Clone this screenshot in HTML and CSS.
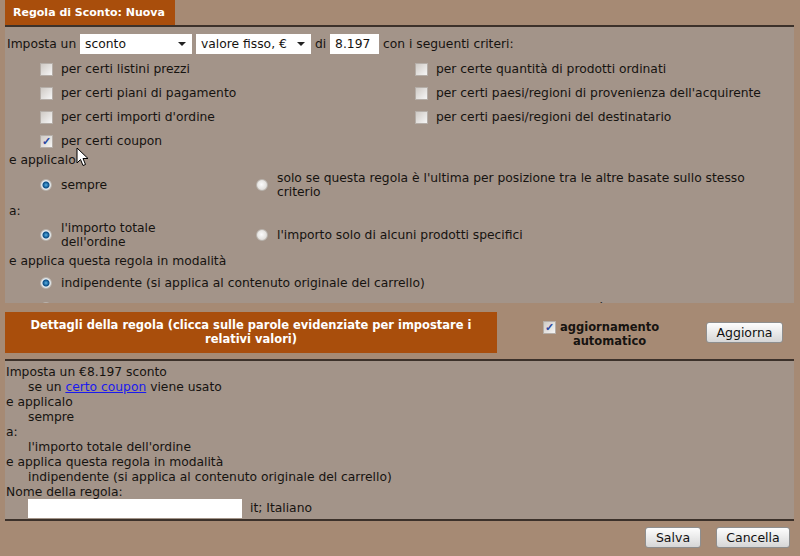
FILE: index.html
```html
<!DOCTYPE html>
<html lang="it">
<head>
  <meta charset="UTF-8" />
  <title>Regola di Sconto: Nuova</title>
  <link rel="stylesheet" href="styles.css">
</head>
<body>
  <div class="page">
    <div class="title-tab">Regola di Sconto: Nuova</div>

    <div class="top-panel">
      <div class="main-row">
        Imposta un
        <span class="select w1"><select><option>sconto</option></select><span class="caret"></span></span>
        <span class="select w2"><select><option>valore fisso, €</option></select><span class="caret"></span></span>
        di <input class="amount" type="text" value="8.197" />
        con i seguenti criteri:
      </div>

      <div class="criteria">
        <label class="crit"><input type="checkbox" class="cb" /> per certi listini prezzi</label>
        <label class="crit"><input type="checkbox" class="cb" /> per certe quantità di prodotti ordinati</label>
        <label class="crit"><input type="checkbox" class="cb" /> per certi piani di pagamento</label>
        <label class="crit"><input type="checkbox" class="cb" /> per certi paesi/regioni di provenienza dell'acquirente</label>
        <label class="crit"><input type="checkbox" class="cb" /> per certi importi d'ordine</label>
        <label class="crit"><input type="checkbox" class="cb" /> per certi paesi/regioni del destinatario</label>
        <label class="crit"><input type="checkbox" class="cb" checked /> per certi coupon</label>
      </div>

      <div class="sub first-sub">e applicalo</div>
      <div class="opt-row r1">
        <label class="opt left"><input type="radio" name="when" class="rd" checked /><span class="txt">sempre</span></label>
        <label class="opt"><input type="radio" name="when" class="rd" /><span class="txt wide">solo se questa regola è l'ultima per posizione tra le altre basate sullo stesso criterio</span></label>
      </div>

      <div class="sub s2">a:</div>
      <div class="opt-row r2">
        <label class="opt left"><input type="radio" name="target" class="rd" checked /><span class="txt narrow">l'importo totale dell'ordine</span></label>
        <label class="opt"><input type="radio" name="target" class="rd" /><span class="txt wide">l'importo solo di alcuni prodotti specifici</span></label>
      </div>

      <div class="sub s3">e applica questa regola in modalità</div>
      <div class="opt-row r3">
        <label class="opt"><input type="radio" name="mode" class="rd" checked /><span class="txt">indipendente (si applica al contenuto originale del carrello)</span></label>
      </div>
      <div class="opt-row r4">
        <label class="opt"><input type="radio" name="mode" class="rd" /><span class="txt">in cascata (si applica al risultato delle regole precedenti impostate nella stessa modalità)</span></label>
      </div>
    </div>

    <div class="middle">
      <div class="details-box">Dettagli della regola (clicca sulle parole evidenziate per impostare i relativi valori)</div>
      <label class="auto">
        <input type="checkbox" class="cb" checked />
        <span class="auto-text">aggiornamento<br>automatico</span>
      </label>
      <button class="btn refresh">Aggiorna</button>
    </div>

    <div class="summary">
      <div>Imposta un €8.197 sconto</div>
      <div class="ind">se un <a href="#">certo coupon</a> viene usato</div>
      <div>e applicalo</div>
      <div class="ind">sempre</div>
      <div>a:</div>
      <div class="ind">l'importo totale dell'ordine</div>
      <div>e applica questa regola in modalità</div>
      <div class="ind">indipendente (si applica al contenuto originale del carrello)</div>
      <div>Nome della regola:</div>
      <div class="ind name-row"><input type="text" class="name-input" /> it; Italiano</div>
    </div>

    <div class="actions">
      <button class="btn save">Salva</button>
      <button class="btn cancel">Cancella</button>
    </div>
  </div>

  <svg class="cursor" width="13" height="20" viewBox="0 0 13 20">
    <path d="M1 1 L1 16 L4.5 12.5 L7 18.5 L9.5 17.5 L7 11.5 L12 11.5 Z" fill="#fff" stroke="#000" stroke-width="1" stroke-linejoin="round" />
  </svg>
</body>
</html>
```

FILE: styles.css
```css
* {
  box-sizing: border-box;
}

body {
  margin: 0;
  background-color: #a68a74;
  font-family: "DejaVu Sans", Verdana, sans-serif;
  font-size: 12.3px;
  color: #161310;
  position: relative;
}

.page {
  padding: 0 6px 0 5px;
}

.title-tab {
  display: inline-block;
  background-color: #a94e0c;
  color: #fff;
  font-weight: bold;
  font-size: 11px;
  height: 25px;
  line-height: 25px;
  padding: 0 8px;
  width: 170px;
  white-space: nowrap;
}

.top-panel {
  border-top: 2px solid #3c312a;
  background-color: #a39489;
  height: 278px;
  overflow: hidden;
  padding-left: 2px;
}

/* first line: imposta un ... */
.main-row {
  margin-top: 7px;
  height: 20px;
  line-height: 20px;
  white-space: nowrap;
}

.select {
  display: inline-flex;
  align-items: center;
  background: #fff;
  height: 20px;
  vertical-align: top;
  padding-right: 6px;
}

.select.w1 { width: 112px; }
.select.w2 { width: 115px; }

.select select {
  appearance: none;
  border: none;
  background: transparent;
  font: inherit;
  color: #161310;
  flex: 1;
  padding: 0 0 0 5px;
  outline: none;
}

.caret {
  width: 0;
  height: 0;
  border-left: 4px solid transparent;
  border-right: 4px solid transparent;
  border-top: 4px solid #222;
}

.amount {
  width: 49px;
  height: 20px;
  border: none;
  font: inherit;
  padding: 0 5px;
  vertical-align: top;
  color: #161310;
}

.criteria {
  display: grid;
  grid-template-columns: 375px 1fr;
  padding-left: 33px;
  margin-top: 3px;
}

.crit {
  display: flex;
  align-items: center;
  gap: 8px;
  height: 24px;
  white-space: nowrap;
}

.cb {
  appearance: none;
  margin: 0;
  width: 13px;
  height: 13px;
  border: 1px solid #b5aea8;
  background: linear-gradient(135deg, #cfcac5, #f6f6f6);
  display: inline-grid;
  place-content: center;
  flex-shrink: 0;
}

.cb:checked::after {
  content: "✓";
  color: #2c48a0;
  font-size: 11px;
  font-weight: bold;
  line-height: 1;
}

.rd {
  appearance: none;
  margin: 0;
  width: 12px;
  height: 12px;
  border-radius: 50%;
  border: 1px solid #b9b3ad;
  background: radial-gradient(circle at 45% 45%, #fbfbfb 0, #d4d0cc 100%);
  flex-shrink: 0;
}

.rd:checked {
  background: radial-gradient(circle at 50% 50%, #5fb0e0 0, #1e6ea8 2px, #0c4c84 3px, #e8eef2 4px, #d2d0cc 100%);
}

.sub {
  line-height: 15px;
  padding-left: 2px;
}

.s2, .s3 { margin-top: 5px; }

.opt-row {
  display: flex;
  align-items: center;
  padding-left: 33px;
}

.r1 { margin-top: 3px; }
.r2 { margin-top: 2px; }
.r3 { margin-top: 7px; }
.r4 { margin-top: 11px; white-space: nowrap; }

.opt {
  display: flex;
  align-items: center;
  gap: 9px;
}

.opt.left {
  width: 216px;
}

.txt {
  line-height: 14px;
}

.txt.narrow { width: 110px; }
.txt.wide { width: 490px; }

/* middle bar */
.middle {
  display: flex;
  align-items: center;
  margin-top: 9px;
  height: 41px;
}

.details-box {
  width: 492px;
  height: 41px;
  background-color: #a94e0c;
  color: #fff;
  font-weight: bold;
  font-size: 11.5px;
  text-align: center;
  line-height: 14px;
  padding: 6px 16px;
}

.auto {
  display: flex;
  align-items: flex-start;
  gap: 4px;
  margin-left: 46px;
  font-weight: bold;
  font-size: 11.5px;
  margin-top: 2px;
}

.auto .cb {
  margin-top: 1px;
}

.auto-text {
  text-align: center;
  line-height: 14px;
}

.btn {
  font-family: "DejaVu Sans", Verdana, sans-serif;
  font-size: 12.5px;
  color: #111;
  height: 21px;
  padding: 0;
  border: 1px solid #8e8e8e;
  border-radius: 3px;
  background: linear-gradient(#fdfdfd, #e6e6e6 60%, #d6d6d6);
}

.refresh {
  width: 77px;
  margin-left: auto;
  margin-right: 11px;
}

.summary {
  margin-top: 6px;
  border-top: 2px solid #3c312a;
  border-bottom: 2px solid #3c312a;
  background-color: #a39489;
  padding: 4px 0 0 1px;
  height: 162px;
  line-height: 15px;
}

.summary .ind {
  padding-left: 22px;
}

.summary a {
  color: #1a1aee;
}

.name-row {
  display: flex;
  align-items: center;
  gap: 8px;
  margin-top: -1px;
}

.name-input {
  width: 214px;
  height: 19px;
  border: none;
  background: #fff;
}

.actions {
  display: flex;
  justify-content: flex-end;
  gap: 15px;
  margin-top: 6px;
  padding-right: 4px;
}

.save { width: 56px; }
.cancel { width: 74px; }

.cursor {
  position: absolute;
  left: 76px;
  top: 147px;
}
```
